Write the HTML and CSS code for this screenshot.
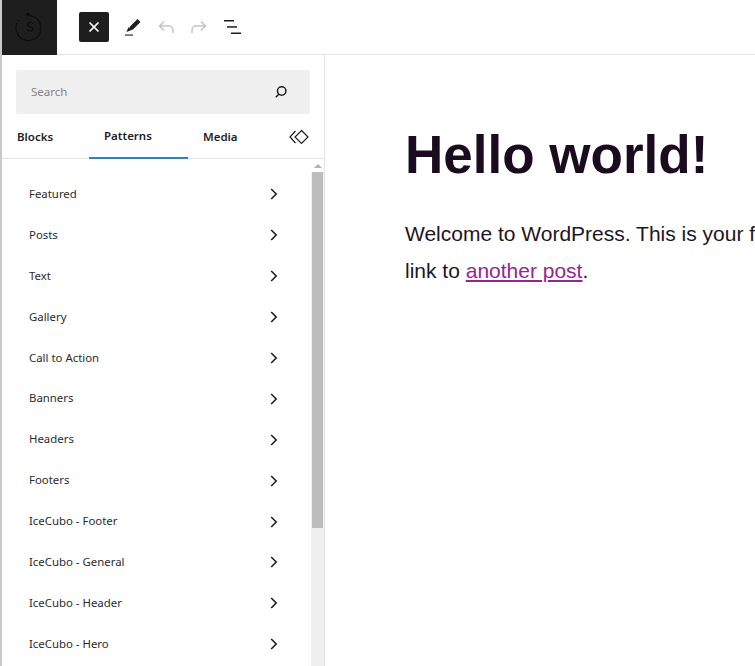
FILE: index.html
```html
<!DOCTYPE html>
<html lang="en">
<head>
<meta charset="utf-8">
<title>Hello world</title>
<link rel="stylesheet" href="styles.css">
</head>
<body>
<div class="app">
  <header class="topbar">
    <div class="logo">
      <svg width="34" height="34" viewBox="0 0 34 34" fill="none" stroke="#0b0b0b" stroke-width="1.1">
        <path d="M15 4.500a12.500 12.500 0 1 1-11.500 9" />
        <path d="M3.500 13.500a12.500 12.500 0 0 1 3-5" stroke-dasharray="1.5 2"/>
        <circle cx="15" cy="3.500" r="1.800" fill="#0b0b0b" stroke="none"/>
        <path d="M20 12.500c-1.500-1.500-5.500-1.500-5.500 1 0 2.800 5.500 1.500 5.500 4.500 0 2.500-4.500 2.500-6 1"/>
      </svg>
    </div>
    <div class="tools">
      <button class="close" aria-label="Close">
        <svg width="12" height="12" viewBox="0 0 12 12" stroke="#fff" stroke-width="1.700"><path d="M1.500 1.500l9 9M10.500 1.500l-9 9"/></svg>
      </button>
      <svg class="tool" width="24" height="24" viewBox="0 0 24 24" fill="#1e1e1e"><path d="M9 15.500l1-4 7.500-7.500 3 3-7.500 7.500z"/><rect x="5" y="19.300" width="8" height="1.500" opacity=".75"/><path d="M6.500 17l2-5 3 3z"/></svg>
      <svg class="tool" width="24" height="24" viewBox="0 0 24 24" fill="none" stroke="#c4c4c4" stroke-width="1.500"><path d="M10 6.500L5.500 11l4.500 4.500M5.500 11H15a4 4 0 0 1 4 4v3"/></svg>
      <svg class="tool" width="24" height="24" viewBox="0 0 24 24" fill="none" stroke="#c4c4c4" stroke-width="1.500"><path d="M14 6.500l4.500 4.500-4.500 4.500M18.500 11H9a4 4 0 0 0-4 4v3"/></svg>
      <svg class="tool" width="24" height="24" viewBox="0 0 24 24" fill="#1e1e1e"><rect x="3" y="5" width="10" height="1.500"/><rect x="6" y="11.200" width="10" height="1.500"/><rect x="10" y="17.500" width="10" height="1.500"/></svg>
    </div>
  </header>
  <div class="main">
    <aside class="sidebar">
      <div class="search">
        <span class="search-label">Search</span>
        <svg width="16" height="16" viewBox="0 0 16 16" fill="none" stroke="#1e1e1e" stroke-width="1.500"><circle cx="8.700" cy="7" r="4.200"/><path d="M5.800 10.200L2.800 13.200"/></svg>
      </div>
      <nav class="tabs">
        <span class="tab tab-blocks">Blocks</span>
        <span class="tab tab-active">Patterns</span>
        <span class="tab tab-media">Media</span>
        <svg class="tab-icon" width="20" height="16" viewBox="0 0 20 16" fill="none" stroke="#1e1e1e" stroke-width="1.200"><path d="M6.500 2L1 8l5.500 6"/><path d="M12.500 1.500L19 8l-6.500 6.500L6 8z"/></svg>
      </nav>
      <div class="panel">
        <ul class="list">
          <li class="row"><span>Featured</span><svg class="chev" width="8" height="12" viewBox="0 0 8 12" fill="none" stroke="#1e1e1e" stroke-width="1.600"><path d="M1.200 1l5 5-5 5"/></svg></li>
          <li class="row"><span>Posts</span><svg class="chev" width="8" height="12" viewBox="0 0 8 12" fill="none" stroke="#1e1e1e" stroke-width="1.600"><path d="M1.200 1l5 5-5 5"/></svg></li>
          <li class="row"><span>Text</span><svg class="chev" width="8" height="12" viewBox="0 0 8 12" fill="none" stroke="#1e1e1e" stroke-width="1.600"><path d="M1.200 1l5 5-5 5"/></svg></li>
          <li class="row"><span>Gallery</span><svg class="chev" width="8" height="12" viewBox="0 0 8 12" fill="none" stroke="#1e1e1e" stroke-width="1.600"><path d="M1.200 1l5 5-5 5"/></svg></li>
          <li class="row"><span>Call to Action</span><svg class="chev" width="8" height="12" viewBox="0 0 8 12" fill="none" stroke="#1e1e1e" stroke-width="1.600"><path d="M1.200 1l5 5-5 5"/></svg></li>
          <li class="row"><span>Banners</span><svg class="chev" width="8" height="12" viewBox="0 0 8 12" fill="none" stroke="#1e1e1e" stroke-width="1.600"><path d="M1.200 1l5 5-5 5"/></svg></li>
          <li class="row"><span>Headers</span><svg class="chev" width="8" height="12" viewBox="0 0 8 12" fill="none" stroke="#1e1e1e" stroke-width="1.600"><path d="M1.200 1l5 5-5 5"/></svg></li>
          <li class="row"><span>Footers</span><svg class="chev" width="8" height="12" viewBox="0 0 8 12" fill="none" stroke="#1e1e1e" stroke-width="1.600"><path d="M1.200 1l5 5-5 5"/></svg></li>
          <li class="row"><span>IceCubo - Footer</span><svg class="chev" width="8" height="12" viewBox="0 0 8 12" fill="none" stroke="#1e1e1e" stroke-width="1.600"><path d="M1.200 1l5 5-5 5"/></svg></li>
          <li class="row"><span>IceCubo - General</span><svg class="chev" width="8" height="12" viewBox="0 0 8 12" fill="none" stroke="#1e1e1e" stroke-width="1.600"><path d="M1.200 1l5 5-5 5"/></svg></li>
          <li class="row"><span>IceCubo - Header</span><svg class="chev" width="8" height="12" viewBox="0 0 8 12" fill="none" stroke="#1e1e1e" stroke-width="1.600"><path d="M1.200 1l5 5-5 5"/></svg></li>
          <li class="row"><span>IceCubo - Hero</span><svg class="chev" width="8" height="12" viewBox="0 0 8 12" fill="none" stroke="#1e1e1e" stroke-width="1.600"><path d="M1.200 1l5 5-5 5"/></svg></li>
        </ul>
        <div class="scrollbar">
          <div class="arrow"></div>
          <div class="thumb"></div>
        </div>
      </div>
    </aside>
    <main class="editor">
      <h1 class="title">Hello world!</h1>
      <p class="para">Welcome to WordPress. This is your f</p>
      <p class="para">link to <a class="link" href="#">another post</a>.</p>
    </main>
  </div>
</div>
</body>
</html>
```
FILE: styles.css
```css
* { box-sizing: border-box; }
html, body { margin: 0; height: 100%; overflow: hidden; background: #fff; }
body { font-family: "Noto Sans", "Open Sans", sans-serif; color: #1e1e1e; }
.app { width: 755px; height: 666px; display: flex; flex-direction: column; overflow: hidden; border-left: 2px solid #c9c9c9; }
.topbar { height: 55px; flex: none; display: flex; border-bottom: 1px solid #e3e3e3; }
.logo { width: 55px; height: 55px; background: #1e1e1e; display: flex; align-items: center; justify-content: center; }
.tools { display: flex; align-items: center; padding-left: 22px; }
.close { width: 30px; height: 30px; padding: 0; border: 0; border-radius: 2px; background: #1e1e1e; display: flex; align-items: center; justify-content: center; margin-right: 11px; }
.tool { display: block; margin-right: 9.600px; }
.main { flex: 1; display: flex; min-height: 0; }
.sidebar { width: 323px; flex: none; border-right: 1px solid #e3e3e3; display: flex; flex-direction: column; }
.search { margin: 15px 14px 0 14px; height: 44px; background: #f0f0f0; border-radius: 2px; display: flex; align-items: center; justify-content: space-between; padding: 0 21px 0 15px; flex: none; }
.search-label { font-size: 11.500px; color: #848484; margin-top: -2px; }
.tabs { height: 45px; flex: none; display: flex; align-items: stretch; border-bottom: 1px solid #e3e3e3; font-size: 11.500px; font-weight: 600; }
.tab { display: flex; align-items: center; padding-bottom: 1px; height: 45px; }
.tab-blocks { margin-left: 15px; width: 72px; }
.tab-active { width: 99px; padding-left: 15px; border-bottom: 2px solid #2a86bb; }
.tab-media { margin-left: 15px; width: 86px; }
.tab-icon { align-self: center; margin-top: 2px; }
.panel { flex: 1; display: flex; min-height: 0; overflow: hidden; }
.list { flex: 1; margin: 0; padding: 15px 0 0; list-style: none; overflow: hidden; }
.row { height: 40.900px; display: flex; align-items: center; justify-content: space-between; padding: 0 33px 0 27px; font-size: 11.400px; color: #2b2b2b; }
.row span { margin-top: -2px; }
.scrollbar { width: 13px; flex: none; background: #f0f0f0; }
.arrow { height: 13px; position: relative; background: #fff; }
.arrow::after { content: ""; position: absolute; left: 3px; top: 5px; border: 4px solid transparent; border-top: 0; border-bottom: 4px solid #b0b0b0; }
.thumb { height: 356px; margin: 0 1px; background: #bdbdbd; }
.editor { flex: 1; min-width: 0; overflow: hidden; padding: 0 0 0 80px; white-space: nowrap; font-family: "Liberation Sans", Arial, sans-serif; color: #1a0c1e; }
.title { margin: 67px 0 0; font-size: 53px; line-height: 66px; font-weight: 700; }
.para { margin: 0; font-size: 21px; line-height: 37px; color: #1e1423; }
.title + .para { margin-top: 27px; }
.link { color: #93278f; text-decoration: underline; }
```
